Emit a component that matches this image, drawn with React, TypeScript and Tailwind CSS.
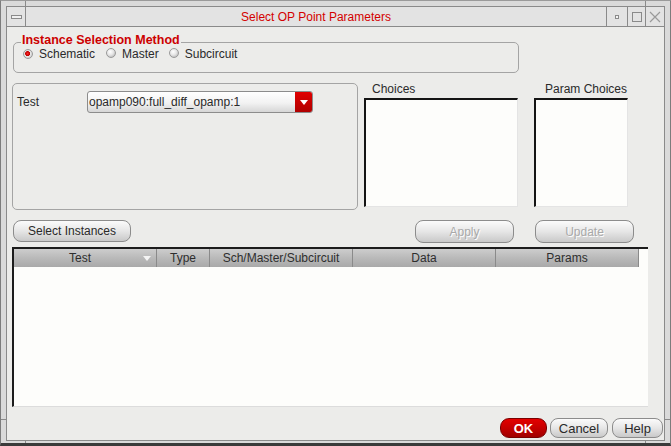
import React from "react";

const btn =
  "flex items-center justify-center rounded-[8px] border border-[#8c8c8c] bg-[linear-gradient(#fbfbfb,#e6e6e6_50%,#c9c9c9)] text-[12px] leading-none";

function Radio({ checked }: { checked?: boolean }) {
  return (
    <span
      className={`inline-block h-[10px] w-[10px] rounded-full border border-[#9a9a9a] ${
        checked
          ? "bg-[radial-gradient(circle_at_45%_45%,#ff2a2a_0,#c00000_35%,#e8e8e8_45%,#b8b8b8_100%)]"
          : "bg-[radial-gradient(circle_at_40%_35%,#ffffff_0,#e6e6e6_45%,#a8a8a8_100%)]"
      }`}
    />
  );
}

function HeaderCell({ label, w, arrow }: { label: string; w: string; arrow?: boolean }) {
  return (
    <div
      className={`${w} relative flex h-full items-center justify-center border-r border-[#8a8a8a] ${
        arrow ? "pr-[10px]" : ""
      }`}
    >
      <span>{label}</span>
      {arrow && (
        <span className="absolute right-[5px] top-[7px] h-0 w-0 border-l-[4px] border-r-[4px] border-t-[5px] border-l-transparent border-r-transparent border-t-[#f4f4f4]" />
      )}
    </div>
  );
}

export default function App() {
  return (
    <div className="relative h-[446px] w-[671px] overflow-hidden border-x border-t border-b-[3px] border-x-[#7c7c7c] border-t-[#9a9a9a] border-b-[#3a3a3a] bg-[#dadada] pb-[2px] pl-[5px] pr-[5px] pt-[5px] font-['Liberation_Sans',Arial,sans-serif] text-[12px] text-[#2a2a2a]">
      {/* frame corner notches */}
      <span className="absolute left-[24px] top-0 h-[5px] w-px bg-[#8a8a8a]" />
      <span className="absolute left-[644px] top-0 h-[5px] w-px bg-[#8a8a8a]" />
      <span className="absolute bottom-0 left-[24px] h-[2px] w-px bg-[#8a8a8a]" />
      <span className="absolute bottom-0 left-[644px] h-[2px] w-px bg-[#8a8a8a]" />
      <span className="absolute left-0 top-[418px] h-px w-[5px] bg-[#8a8a8a]" />
      <span className="absolute right-0 top-[418px] h-px w-[5px] bg-[#8a8a8a]" />

      <div className="flex h-full flex-col border border-[#8a8a8a]">
        {/* title bar */}
        <div className="flex h-[20px] border-b border-[#8a8a8a] bg-[#e3e3e3]">
          <div className="flex w-[19px] items-center justify-center border-r border-[#8a8a8a]">
            <span className="h-[4px] w-[11px] border border-[#8a8a8a] bg-[#f0f0f0]" />
          </div>
          <div className="flex flex-1 items-center justify-center border-r border-[#8a8a8a] text-[#d40000]">
            Select OP Point Parameters
          </div>
          <div className="flex w-[21px] items-center justify-center border-r border-[#8a8a8a]">
            <span className="h-[4px] w-[4px] border border-[#8a8a8a] bg-[#f4f4f4]" />
          </div>
          <div className="flex w-[18px] items-center justify-center border-r border-[#8a8a8a]">
            <span className="h-[10px] w-[10px] border border-[#8a8a8a]" />
          </div>
          <div className="flex w-[18px] items-center justify-center">
            <svg width="12" height="12" viewBox="0 0 12 12">
              <path d="M1 1L11 11M11 1L1 11" stroke="#9a9a9a" strokeWidth="1.2" fill="none" />
            </svg>
          </div>
        </div>

        {/* content */}
        <div className="flex flex-1 flex-col bg-[#ececea]">
          {/* instance selection method */}
          <div className="relative ml-[6px] mt-[15px] h-[31px] w-[506px] rounded-[5px] border border-[#a4a4a4]">
            <span className="absolute left-[7px] top-[-10px] bg-[#ececea] px-[1px] text-[12.5px] font-bold leading-[14px] text-[#cc0000]">
              Instance Selection Method
            </span>
            <div className="flex items-center pl-[9px] pt-[4px] leading-[14px]">
              <Radio checked />
              <span className="ml-[6px]">Schematic</span>
              <span className="ml-[11px]">
                <Radio />
              </span>
              <span className="ml-[6px]">Master</span>
              <span className="ml-[10px]">
                <Radio />
              </span>
              <span className="ml-[6px]">Subcircuit</span>
            </div>
          </div>

          {/* test + choices */}
          <div className="mt-[9px] flex h-[128px] items-start">
            <div className="ml-[5px] mt-[1px] flex h-[127px] w-[346px] items-start rounded-[5px] border border-[#a4a4a4] pl-[4px] pt-[7px]">
              <span className="flex h-[22px] w-[70px] items-center">Test</span>
              <div className="flex h-[22px] w-[226px] overflow-hidden rounded-[3px] border border-[#8c8c8c] bg-[linear-gradient(#ffffff,#f2f2f2_55%,#d6d6d6)]">
                <span className="flex flex-1 items-center pl-[1px] text-[12px]">opamp090:full_diff_opamp:1</span>
                <span className="flex w-[17px] items-center justify-center bg-[linear-gradient(#e00000,#b00000)]">
                  <span className="h-0 w-0 border-l-[4px] border-r-[4px] border-t-[5px] border-l-transparent border-r-transparent border-t-white" />
                </span>
              </div>
            </div>
            <div className="ml-[6px] flex flex-col">
              <span className="ml-[8px] h-[16px] leading-[14px]">Choices</span>
              <div className="h-[109px] w-[154px] border-b border-l-2 border-r border-t-2 border-b-[#e4e4e4] border-l-[#141414] border-r-[#e4e4e4] border-t-[#141414] bg-[#fdfdfb]" />
            </div>
            <div className="ml-[16px] flex flex-col">
              <span className="ml-[11px] h-[16px] whitespace-nowrap leading-[14px]">Param Choices</span>
              <div className="h-[109px] w-[94px] border-b border-l-2 border-r border-t-2 border-b-[#e4e4e4] border-l-[#141414] border-r-[#e4e4e4] border-t-[#141414] bg-[#fdfdfb]" />
            </div>
          </div>

          {/* buttons */}
          <div className="mt-[10px] flex h-[22px]">
            <button className={`${btn} ml-[6px] h-[22px] w-[118px]`}>Select Instances</button>
            <button
              className={`${btn} ml-[284px] h-[23px] w-[99px] text-[#a9a9a9] [text-shadow:1px_1px_0_#ffffff]`}
            >
              Apply
            </button>
            <button
              className={`${btn} ml-[21px] h-[23px] w-[99px] text-[#a9a9a9] [text-shadow:1px_1px_0_#ffffff]`}
            >
              Update
            </button>
          </div>

          {/* table */}
          <div className="ml-[5px] mt-[5px] flex h-[160px] w-[636px] flex-col border-b border-l-2 border-t-2 border-b-[#dcdcdc] border-l-[#1c1c1c] border-t-[#1c1c1c] bg-[#fdfdfb]">
            <div className="flex h-[18px] w-[625px] bg-[linear-gradient(#cdcdcd,#b9b9b9_50%,#a9a9a9)] text-[12px] text-[#2e2e2e]">
              <HeaderCell label="Test" w="w-[143px]" arrow />
              <HeaderCell label="Type" w="w-[53px]" />
              <HeaderCell label="Sch/Master/Subcircuit" w="w-[143px]" />
              <HeaderCell label="Data" w="w-[143px]" />
              <HeaderCell label="Params" w="w-[143px]" />
            </div>
          </div>

          {/* bottom buttons */}
          <div className="mr-[1px] mt-[11px] flex justify-end gap-[3px]">
            <button className="flex h-[20px] w-[47px] items-center justify-center rounded-[9px] border border-[#7a0000] bg-[linear-gradient(#e40000,#c20000_55%,#a00000)] text-[13px] font-bold leading-none text-white">
              OK
            </button>
            <button className={`${btn} h-[20px] w-[58px] text-[13px]`}>Cancel</button>
            <button className={`${btn} ml-[1px] h-[20px] w-[51px] text-[13px]`}>Help</button>
          </div>
        </div>
      </div>
    </div>
  );
}
